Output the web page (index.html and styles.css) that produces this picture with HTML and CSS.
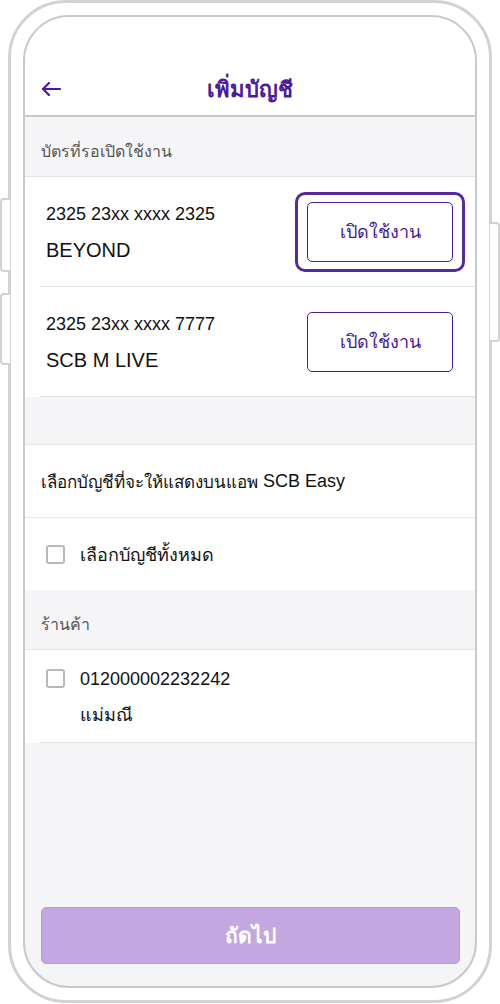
FILE: index.html
```html
<!DOCTYPE html>
<html lang="th">
<head>
  <meta charset="UTF-8">
  <meta name="viewport" content="width=device-width, initial-scale=1.0">
  <title>เพิ่มบัญชี</title>
  <link rel="stylesheet" href="styles.css">
</head>
<body>
  <div class="phone">
    <span class="side-btn side-left top"></span>
    <span class="side-btn side-left bottom"></span>
    <span class="side-btn side-right"></span>

    <div class="screen">
      <header class="app-header">
        <div class="header-row">
          <span class="back">
            <svg width="20" height="14" viewBox="0 0 20 14" fill="none" stroke="currentColor" stroke-width="2.2" stroke-linecap="round" stroke-linejoin="round">
              <path d="M19 7H2"/>
              <path d="M8 1L2 7l6 6"/>
            </svg>
          </span>
          <h1>เพิ่มบัญชี</h1>
          <span class="spacer"></span>
        </div>
      </header>

      <div class="section-label">บัตรที่รอเปิดใช้งาน</div>

      <div class="card-list">
        <div class="card-row">
          <div class="card-info">
            <div class="card-no">2325 23xx xxxx 2325</div>
            <div class="card-name">BEYOND</div>
          </div>
          <button class="activate is-focused">เปิดใช้งาน</button>
        </div>
        <div class="card-row">
          <div class="card-info">
            <div class="card-no">2325 23xx xxxx 7777</div>
            <div class="card-name">SCB M LIVE</div>
          </div>
          <button class="activate">เปิดใช้งาน</button>
        </div>
      </div>

      <div class="choose">
        <div class="choose-title"><span class="th">เลือกบัญชีที่จะให้แสดงบนแอพ</span>&nbsp;SCB Easy</div>
        <label class="check-row">
          <span class="box"></span>
          <span>เลือกบัญชีทั้งหมด</span>
        </label>
      </div>

      <div class="section-label">ร้านค้า</div>

      <div class="shop-list">
        <label class="shop-row">
          <span class="box"></span>
          <span class="shop-info">
            <span class="shop-no">012000002232242</span>
            <span class="shop-name">แม่มณี</span>
          </span>
        </label>
      </div>

      <button class="next" disabled>ถัดไป</button>
    </div>
  </div>
</body>
</html>
```

FILE: styles.css
```css
* {
  box-sizing: border-box;
}

body {
  margin: 0;
  background: #fff;
  font-family: 'Liberation Sans', 'Noto Sans', sans-serif;
  color: #111;
}

.phone {
  position: relative;
  height: 1003px;
  margin: 0 8px;
  padding: 12px;
  border: 3px solid #d2d2d2;
  border-radius: 58px;
  display: flex;
  flex-direction: column;
}

.side-btn {
  position: absolute;
  width: 10px;
  border: 2px solid #d2d2d2;
  background: #fff;
}

.side-left {
  left: -11px;
  border-right: none;
  border-radius: 4px 0 0 4px;
}

.side-left.top {
  top: 195px;
  height: 74px;
}

.side-left.bottom {
  top: 290px;
  height: 72px;
}

.side-right {
  right: -11px;
  top: 219px;
  height: 120px;
  border-left: none;
  border-radius: 0 4px 4px 0;
}

.screen {
  flex: 1;
  display: flex;
  flex-direction: column;
  border: 2px solid #c9c9c9;
  border-radius: 46px;
  overflow: hidden;
  background: #f5f5f7;
}

.app-header {
  height: 100px;
  padding-top: 46px;
  background: #fff;
  border-bottom: 2px solid #c8c8c8;
}

.header-row {
  height: 52px;
  display: flex;
  align-items: center;
  padding: 0 16px;
}

.back,
.spacer {
  width: 40px;
  color: #4b1b9e;
  display: flex;
}

.app-header h1 {
  flex: 1;
  margin: 0;
  text-align: center;
  font-size: 22px;
  font-weight: 600;
  color: #4a1c9c;
}

.section-label {
  height: 60px;
  padding: 10px 16px 0;
  display: flex;
  align-items: center;
  font-size: 16px;
  color: #555;
  border-bottom: 1px solid #e4e4e4;
}

.card-list {
  background: #fff;
}

.card-row {
  height: 110px;
  margin-left: 15px;
  padding: 0 22px 0 6px;
  display: flex;
  align-items: center;
  justify-content: space-between;
  border-bottom: 1px solid #e2e2e2;
}

.card-info {
  display: flex;
  flex-direction: column;
  gap: 12px;
}

.card-no {
  font-size: 18px;
  line-height: 24px;
}

.card-name {
  font-size: 20px;
  line-height: 24px;
}

.activate {
  position: relative;
  width: 146px;
  height: 60px;
  border: 1.5px solid #4b1e96;
  border-radius: 5px;
  background: #fff;
  color: #46189a;
  font-family: inherit;
  font-size: 18px;
  font-weight: 500;
}

.activate.is-focused::after {
  content: '';
  position: absolute;
  inset: -11px -13px;
  border: 3.5px solid #55299f;
  border-radius: 10px;
}

.choose {
  margin-top: 47px;
  background: #fff;
  border-top: 1px solid #e6e6e6;
}

.choose-title {
  height: 73px;
  padding: 0 16px;
  display: flex;
  align-items: center;
  font-size: 18px;
  border-bottom: 1px solid #e6e6e6;
}

.choose-title .th {
  font-size: 17px;
}

.check-row,
.shop-row {
  display: flex;
  gap: 15px;
  padding-left: 21px;
}

.check-row {
  height: 72px;
  align-items: center;
  font-size: 18px;
}

.box {
  width: 19px;
  height: 19px;
  flex: none;
  border: 2px solid #b8b8b8;
  border-radius: 3px;
  background: #fff;
}

.shop-list {
  background: #fff;
}

.shop-row {
  height: 93px;
  margin-left: 15px;
  padding: 19px 0 0 6px;
  border-bottom: 1px solid #e2e2e2;
}

.shop-info {
  display: flex;
  flex-direction: column;
  gap: 16px;
  font-size: 18px;
  line-height: 20px;
}

.next {
  margin: auto 15px 22px 16px;
  height: 57px;
  border: 1px solid #b99ddb;
  border-radius: 5px;
  background: #c2a7e1;
  color: #fff;
  font-family: inherit;
  font-size: 21px;
  font-weight: 600;
}
```
